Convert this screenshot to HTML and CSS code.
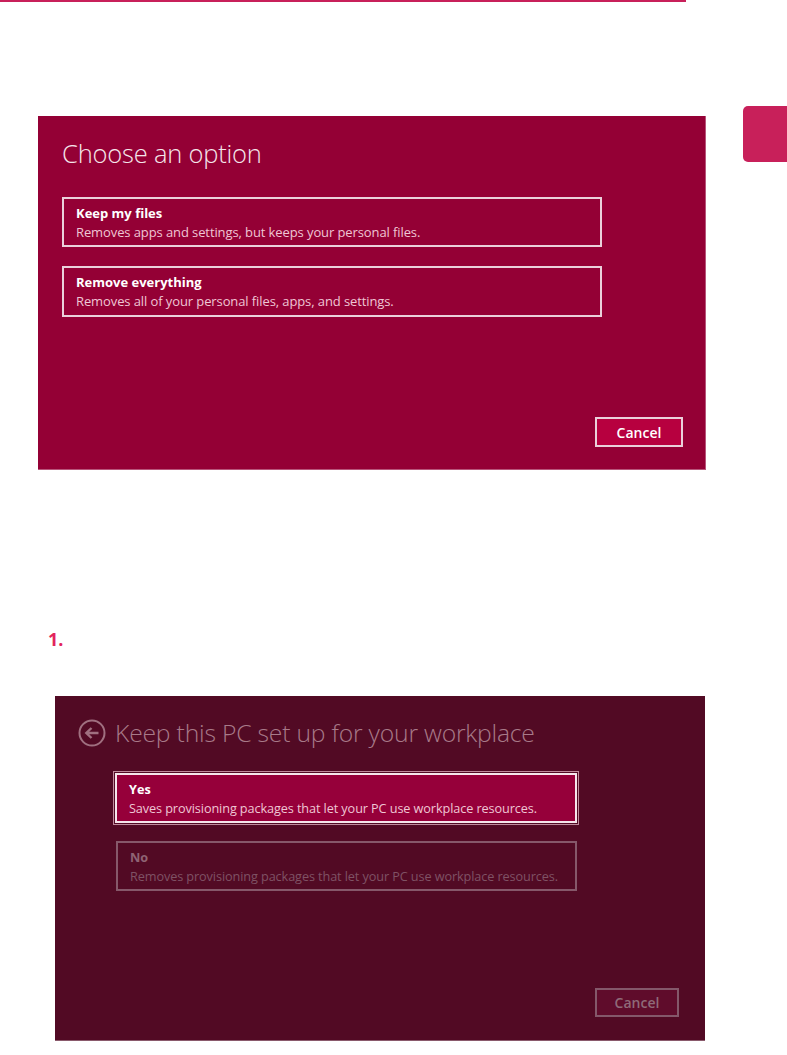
FILE: index.html
```html
<!DOCTYPE html>
<html lang="en">
<head>
<meta charset="utf-8">
<title>Reset this PC</title>
<link rel="stylesheet" href="styles.css">
</head>
<body>
<div class="page">
  <div class="top-rule"></div>
  <div class="side-tab"></div>

  <section class="panel panel-one">
    <h1 class="panel-title">Choose an option</h1>
    <div class="options">
      <div class="option">
        <div class="option-name">Keep my files</div>
        <div class="option-desc">Removes apps and settings, but keeps your personal files.</div>
      </div>
      <div class="option">
        <div class="option-name">Remove everything</div>
        <div class="option-desc">Removes all of your personal files, apps, and settings.</div>
      </div>
    </div>
    <div class="actions">
      <button class="btn btn-cancel">Cancel</button>
    </div>
  </section>

  <div class="step">1.</div>

  <section class="panel panel-two">
    <div class="title-row">
      <svg class="back-icon" width="28" height="28" viewBox="0 0 28 28" aria-hidden="true">
        <circle cx="14" cy="14" r="12.5" fill="none" stroke="currentColor" stroke-width="2"/>
        <path d="M20.5 14H8.5M13.5 9L8.3 14l5.2 5" fill="none" stroke="currentColor" stroke-width="2.4" stroke-linecap="butt" stroke-linejoin="miter"/>
      </svg>
      <h2 class="panel-title dim">Keep this PC set up for your workplace</h2>
    </div>
    <div class="options options-two">
      <div class="option selected">
        <div class="option-name">Yes</div>
        <div class="option-desc">Saves provisioning packages that let your PC use workplace resources.</div>
      </div>
      <div class="option disabled">
        <div class="option-name">No</div>
        <div class="option-desc">Removes provisioning packages that let your PC use workplace resources.</div>
      </div>
    </div>
    <div class="actions actions-two">
      <button class="btn btn-cancel-dim">Cancel</button>
    </div>
  </section>
</div>
</body>
</html>
```

FILE: styles.css
```css
html, body {
  margin: 0;
  padding: 0;
  background: #ffffff;
}

body {
  font-family: "Open Sans", "Noto Sans", "Liberation Sans", sans-serif;
  width: 787px;
  height: 1055px;
  overflow: hidden;
}

.page {
  position: relative;
  display: flex;
  flex-direction: column;
  height: 1055px;
}

.top-rule {
  width: 686px;
  height: 2px;
  background: #c8205a;
}

.side-tab {
  position: absolute;
  left: 743px;
  top: 106px;
  width: 44px;
  height: 56px;
  background: #c8205a;
  border-radius: 5px 0 0 5px;
}

.panel {
  box-sizing: border-box;
  display: flex;
  flex-direction: column;
}

.panel-one {
  margin: 114px 0 0 38px;
  width: 668px;
  height: 354px;
  background: #940035;
  border-right: 1px solid #b8557a;
  border-bottom: 1px solid #b8557a;
  padding: 21px 22px 22px 24px;
}

.panel-title {
  margin: 0;
  font-weight: 300;
  font-size: 25.5px;
  line-height: 33px;
  color: #f4e6eb;
  letter-spacing: -0.2px;
  white-space: nowrap;
}

.options {
  margin-top: 27px;
  display: flex;
  flex-direction: column;
  gap: 19px;
  width: 540px;
}

.option {
  box-sizing: border-box;
  height: 50px;
  border: 2px solid #ead0da;
  padding: 5px 12px 0 12px;
}

.option + .option {
  height: 51px;
}

.option-name {
  font-size: 13px;
  font-weight: 700;
  line-height: 18px;
  color: #ffffff;
}

.option-desc {
  font-size: 13px;
  font-weight: 400;
  line-height: 20px;
  color: #efc6d4;
  letter-spacing: -0.1px;
  white-space: nowrap;
}

.actions {
  margin-top: auto;
  display: flex;
  justify-content: flex-end;
}

.btn {
  box-sizing: border-box;
  font-family: inherit;
  font-weight: 600;
  font-size: 14px;
  padding: 0;
  cursor: default;
}

.btn-cancel {
  width: 88px;
  height: 30px;
  background: #b7003f;
  border: 2px solid #ead0da;
  color: #ffffff;
}

.step {
  margin: 157px 0 0 48px;
  font-family: "Open Sans", "Noto Sans", sans-serif;
  font-weight: 700;
  font-size: 18px;
  line-height: 24px;
  color: #e2245d;
}

.panel-two {
  margin: 45px 0 0 55px;
  width: 650px;
  height: 345px;
  background: #520a24;
  border-bottom: 1px solid #8a5a6c;
  padding: 20px 26px 23px 23px;
}

.title-row {
  display: flex;
  align-items: center;
  gap: 9px;
  color: #a07080;
}

.back-icon {
  flex: none;
  color: #a07080;
}

.panel-title.dim {
  color: #a87a89;
  font-size: 24.7px;
}

.options-two {
  margin-top: 22px;
  margin-left: 35px;
  width: 466px;
  gap: 18px;
}

.options-two .option-name,
.options-two .option-desc {
  font-size: 12.7px;
}

.option.selected {
  height: 50px;
  margin: 2px 2px 0 2px;
  width: 462px;
  background: #96003a;
  border: 2px solid #f6e6ec;
  outline: 1px solid #c08a9c;
  outline-offset: 1px;
}

.option.disabled {
  height: 50px;
  margin-left: 3px;
  width: 461px;
  border: 2px solid #86586a;
}

.option.disabled .option-name {
  color: #8f6374;
}

.option.disabled .option-desc {
  color: #7f5264;
}

.btn-cancel-dim {
  width: 84px;
  height: 29px;
  background: #5f0c2b;
  border: 2px solid #84586a;
  color: #8f6a78;
}
```
